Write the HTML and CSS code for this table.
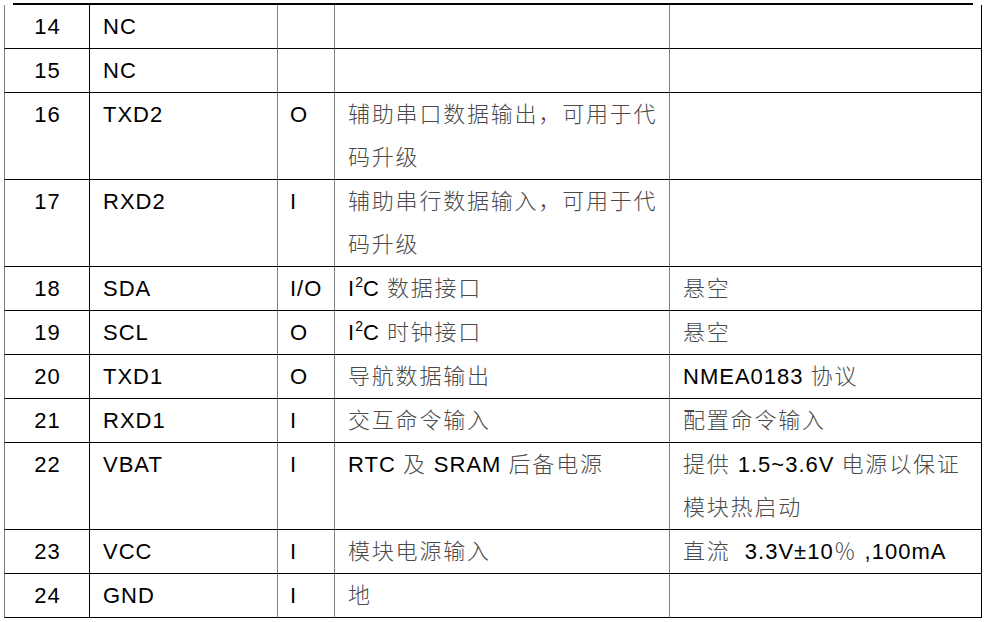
FILE: index.html
```html
<!DOCTYPE html>
<html lang="zh-CN">
<head>
<meta charset="utf-8">
<title>Pin table</title>
<link rel="stylesheet" href="styles.css">
</head>
<body>
<div class="rule"></div>
<div class="pins">
  <div class="c num">14</div><div class="c name">NC</div><div class="c dir"></div><div class="c desc"></div><div class="c note"></div>
  <div class="c num">15</div><div class="c name">NC</div><div class="c dir"></div><div class="c desc"></div><div class="c note"></div>
  <div class="c num">16</div><div class="c name">TXD2</div><div class="c dir">O</div><div class="c desc"><span class="zh">辅助串口数据输出，可用于代码升级</span></div><div class="c note"></div>
  <div class="c num">17</div><div class="c name">RXD2</div><div class="c dir">I</div><div class="c desc"><span class="zh">辅助串行数据输入，可用于代码升级</span></div><div class="c note"></div>
  <div class="c num">18</div><div class="c name">SDA</div><div class="c dir">I/O</div><div class="c desc">I<sup>2</sup>C <span class="zh">数据接口</span></div><div class="c note"><span class="zh">悬空</span></div>
  <div class="c num">19</div><div class="c name">SCL</div><div class="c dir">O</div><div class="c desc">I<sup>2</sup>C <span class="zh">时钟接口</span></div><div class="c note"><span class="zh">悬空</span></div>
  <div class="c num">20</div><div class="c name">TXD1</div><div class="c dir">O</div><div class="c desc"><span class="zh">导航数据输出</span></div><div class="c note">NMEA0183 <span class="zh">协议</span></div>
  <div class="c num">21</div><div class="c name">RXD1</div><div class="c dir">I</div><div class="c desc"><span class="zh">交互命令输入</span></div><div class="c note"><span class="zh">配置命令输入</span></div>
  <div class="c num">22</div><div class="c name">VBAT</div><div class="c dir">I</div><div class="c desc">RTC <span class="zh">及</span> SRAM <span class="zh">后备电源</span></div><div class="c note"><span class="zh">提供</span> 1.5~3.6V <span class="zh">电源以保证模块热启动</span></div>
  <div class="c num">23</div><div class="c name">VCC</div><div class="c dir">I</div><div class="c desc"><span class="zh">模块电源输入</span></div><div class="c note"><span class="zh">直流</span>&nbsp; 3.3V±10<span class="zh">％</span> ,100mA</div>
  <div class="c num">24</div><div class="c name">GND</div><div class="c dir">I</div><div class="c desc"><span class="zh">地</span></div><div class="c note"></div>
</div>
</body>
</html>
```
FILE: styles.css
```css
html, body {
  margin: 0;
  padding: 0;
  background: #fff;
}

.rule {
  width: 960px;
  height: 2px;
  margin: 3px 0 0 13px;
  background: #000;
}

.pins {
  display: grid;
  grid-template-columns: 85px 188px 57px 335px 313px;
  margin-left: 4px;
  font-family: "Liberation Sans", "Noto Sans CJK SC", sans-serif;
  font-size: 22px;
  letter-spacing: 1px;
  color: #000;
}

.c {
  box-sizing: border-box;
  min-height: 44px;
  line-height: 43px;
  border-left: 1px solid #808080;
  border-bottom: 1px solid #000;
  padding: 0 4px 0 13px;
  white-space: normal;
}

.num {
  text-align: center;
  padding: 0 0 0 1px;
}

.name {
  border-left-color: #000;
}

.dir {
  padding-left: 12px;
  padding-right: 0;
}

.note {
  border-right: 1px solid #000;
}

.zh {
  font-family: "Noto Sans CJK SC", sans-serif;
  font-weight: 300;
  line-height: 22px;
  color: #4a4a4a;
  letter-spacing: 1.8px;
}

sup {
  font-size: 14px;
  line-height: 0;
  vertical-align: 9px;
  letter-spacing: 0;
}
```
